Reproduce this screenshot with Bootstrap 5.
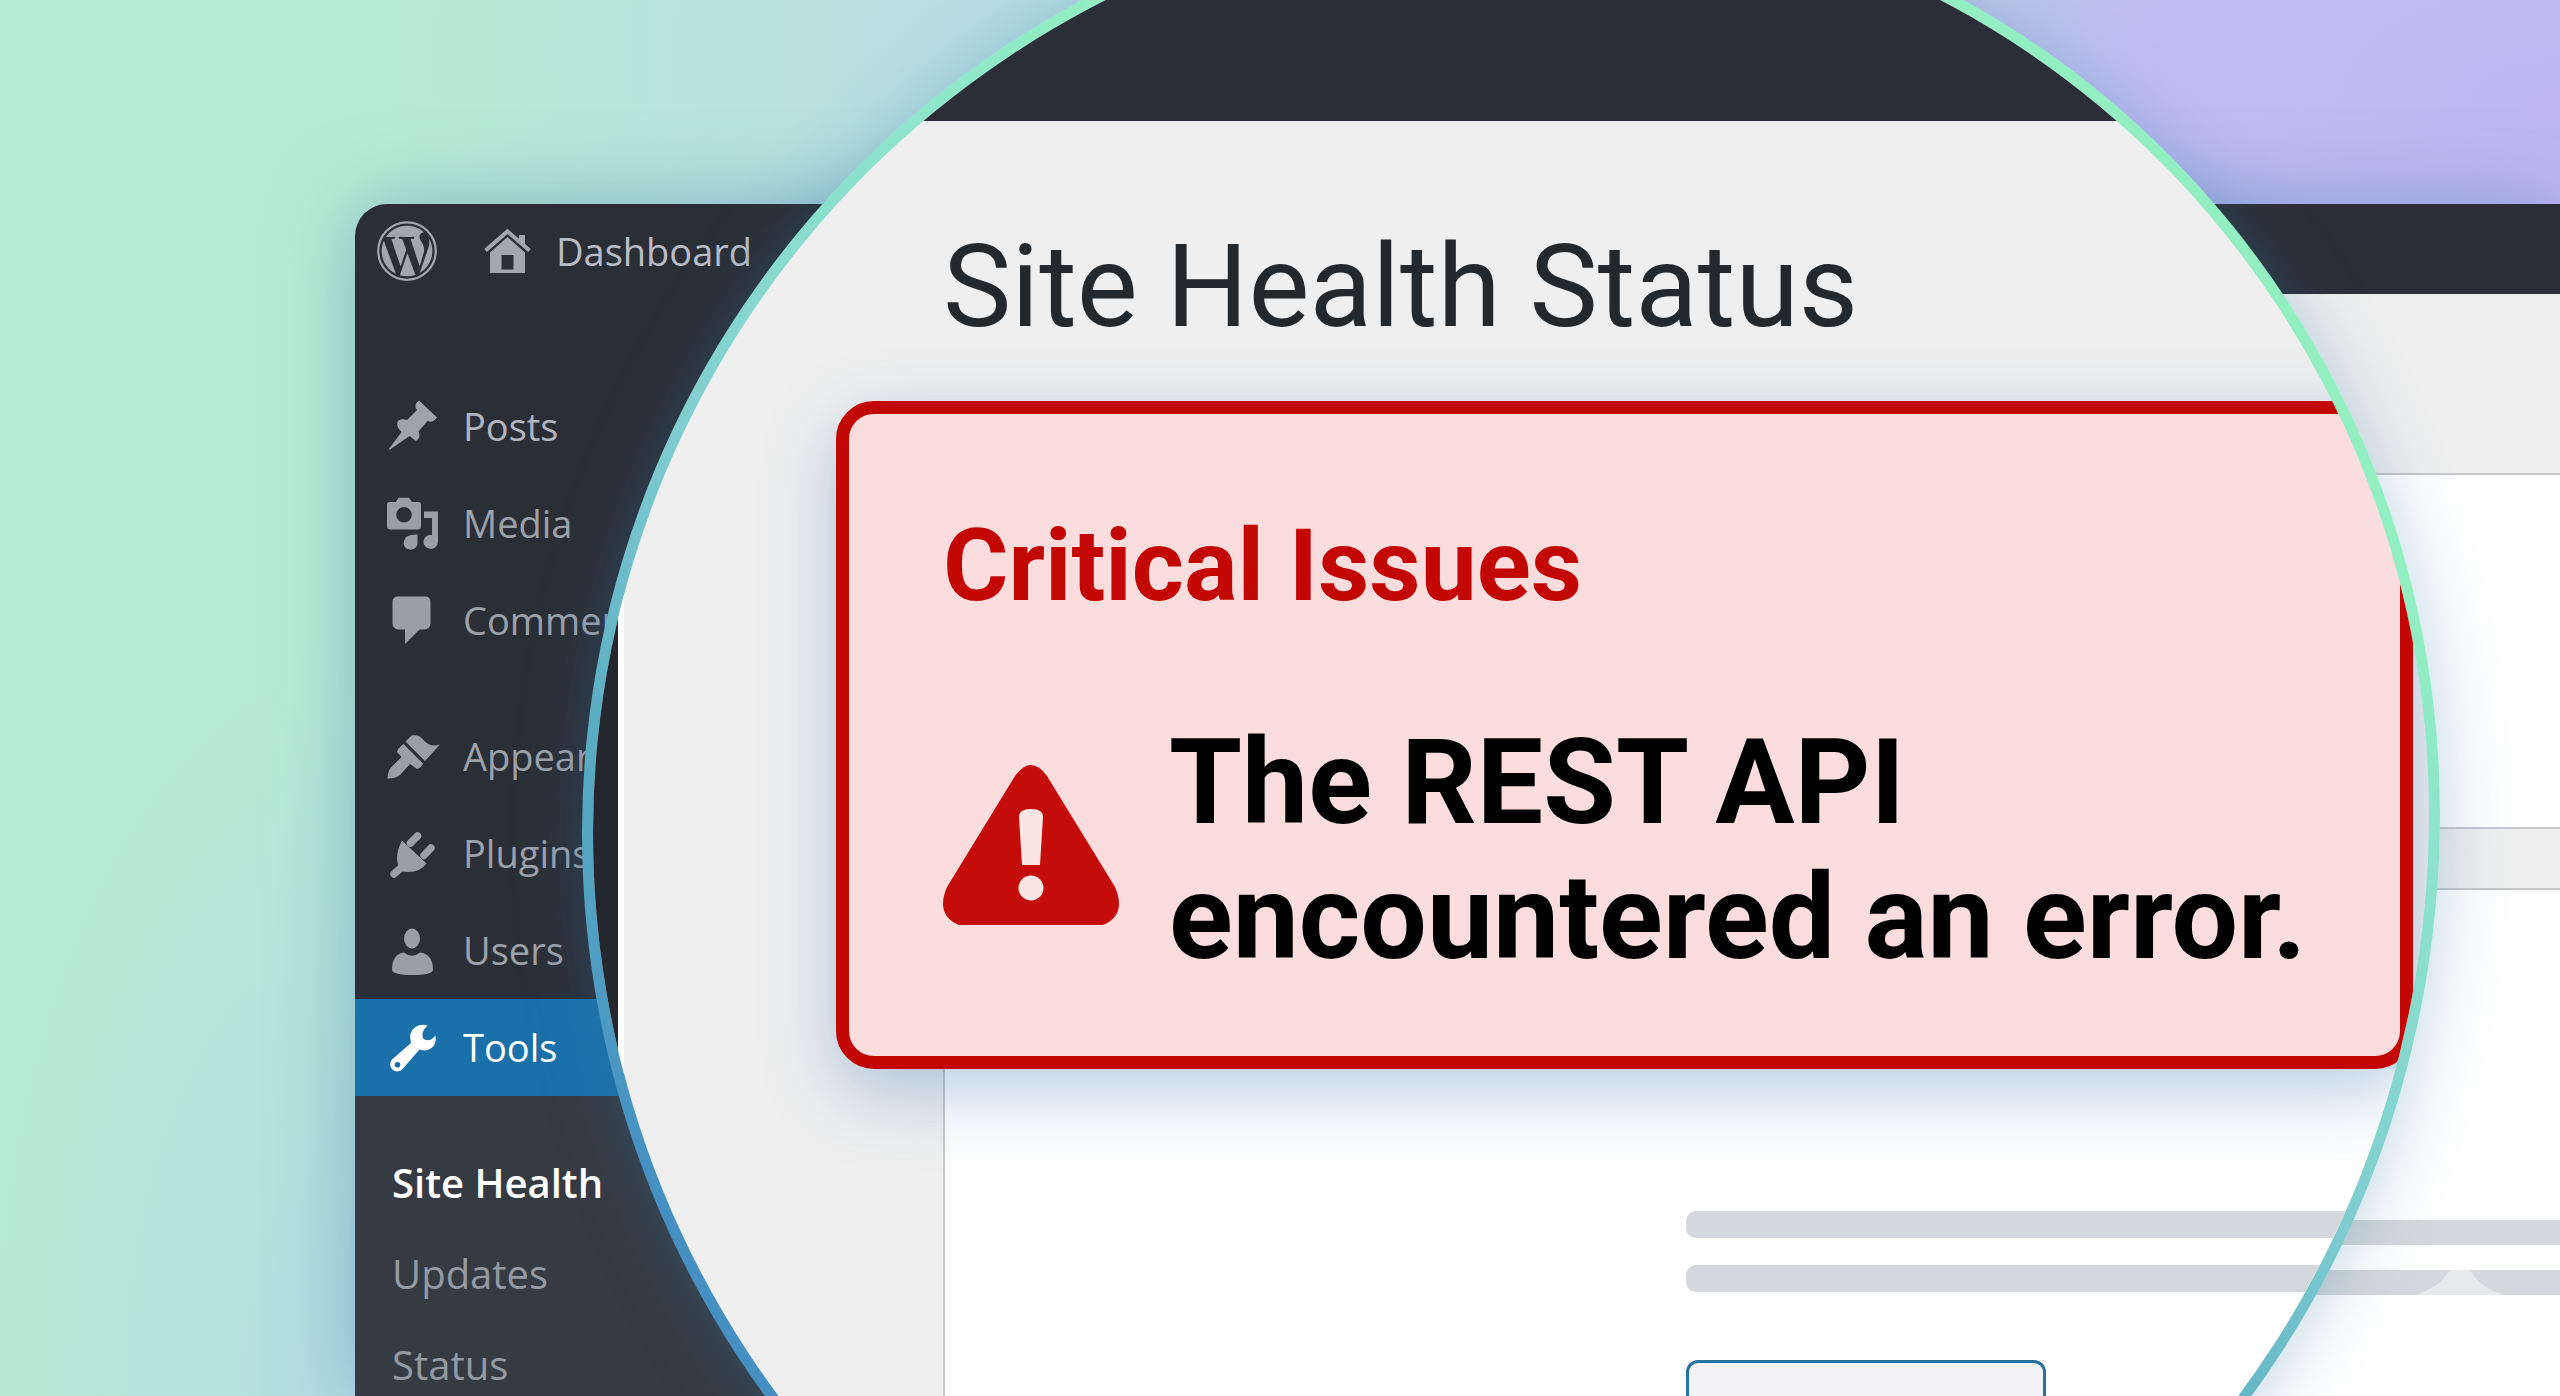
<!DOCTYPE html>
<html lang="en">
<head>
<meta charset="utf-8">
<meta name="viewport" content="width=device-width, initial-scale=1">
<title>Site Health Status</title>
<link href="https://cdn.jsdelivr.net/npm/bootstrap@5.3.0/dist/css/bootstrap.min.css" rel="stylesheet">
<style>
  :root {
    --ink: #2b2e36;
    --ink-soft: #363a42;
    --paper: #efefef;
    --rule: #c6c8cc;
    --alert: #c20705;
    --bar: #d4d8dc;
  }
  body {
    background:
      radial-gradient(ellipse 1100px 640px at 100% 8%, #bfb6f3 0%, #bfbcf3 38%, rgba(184, 200, 240, 0) 100%),
      radial-gradient(ellipse 640px 640px at 40% 4%, #b6dce4 0%, #b8dfe2 20%, rgba(184, 235, 212, 0) 100%),
      radial-gradient(ellipse 380px 760px at 14% 100%, #b4dce4 0%, rgba(184, 235, 212, 0) 100%),
      #b8ebd4;
    font-family: "Open Sans", "Noto Sans", sans-serif;
  }
  .stage { min-height: 100vh; padding: 204px 0 0 355px; }

  /* admin window */
  .admin {
    background: var(--paper);
    border-top-left-radius: 32px;
    box-shadow: 0 0 80px rgba(80, 130, 180, .5);
    overflow: hidden;
    height: calc(100vh - 204px);
  }
  .admin-top { background: var(--ink); height: 90px; padding: 4px 22px 0; color: #b9bcc6; flex: none; }
  .admin-top a { color: inherit; font-size: 38px; line-height: 52px; }
  .logo { width: 60px; height: 60px; margin-right: 47px; }
  .home { width: 48px; height: 48px; }
  .side { background: var(--ink); width: 480px; flex: none; padding-top: 84px; }
  .side-link {
    display: flex; align-items: center; gap: 23px;
    height: 97px; padding-left: 29px;
    color: #9da1aa; font-size: 38px; white-space: nowrap; text-decoration: none;
  }
  .side-link svg { width: 56px; height: 56px; flex: none; }
  .side-link.first { color: #b2b5bf; }
  .side-link.current { background: #1a71a9; color: #fff; }
  .group-gap { margin-top: 39px; }
  .submenu { background: var(--ink-soft); padding: 41px 0 0 37px; }
  .submenu a { display: flex; align-items: center; height: 91px; font-size: 40px; color: #9499a3; text-decoration: none; white-space: nowrap; }
  .submenu a.current { color: #fff; font-weight: 600; }
  .pane { background: #fff; border-top: 2px solid var(--rule); border-bottom: 2px solid var(--rule); }
  .pane-one { height: 356px; margin-top: 179px; }
  .pane-two { margin-top: 59px; padding-top: 330px; border-bottom: 0; }
  .stripe { background: var(--bar); height: 25px; margin-bottom: 25px; position: relative; }
  .spark { position: absolute; right: 56px; top: 0; width: 90px; height: 25px; }

  /* magnifier */
  .lens {
    position: absolute; left: 582px; top: -112px;
    width: 1858px; height: 1890px;
    border-radius: 51% 49% 50% 50% / 50% 49% 51% 50%; padding: 11px;
    background: linear-gradient(205deg, #93efc2 0%, #93efc2 26%, #8be0cd 38%, #7fccd0 50%, #5aacc2 62%, #458fc2 78%, #458fc2 100%);
    box-shadow: 0 4px 70px rgba(50, 120, 170, .32);
  }
  .glass { border-radius: 51% 49% 50% 50% / 50% 49% 51% 50%; overflow: hidden; height: 100%; background: var(--paper); }
  .glass-top { background: var(--ink); height: 222px; flex: none; }
  .glass-edge { background: #24272e; width: 25px; flex: none; }
  .glass-light { background: #fff; width: 6px; flex: none; }
  .glass-main { padding: 98px 0 0 212px; font-family: Roboto, sans-serif; min-width: 0; }
  .glass-title { font-size: 115px; line-height: 136px; font-weight: 400; color: #23282d; margin: 0 0 46px 107px; }
  .issue {
    position: relative; width: 1577px; height: 668px;
    background: #fadddc; border: 13px solid var(--alert); border-radius: 38px;
    padding: 94px 90px 0 94px;
    box-shadow: 0 24px 70px rgba(50, 110, 180, .34);
  }
  .issue-kind { font-size: 100px; line-height: 116px; font-weight: 700; color: var(--alert); margin: 0 0 92px; }
  .issue-text { font-size: 118px; line-height: 135px; font-weight: 700; color: #000; margin: 0; white-space: nowrap; }
  .warn { width: 176px; height: 160px; margin: 49px 50px 0 0; flex: none; }
  .sheet { background: #fff; border-left: 2px solid var(--rule); margin-left: 107px; padding: 142px 0 0 741px; height: 800px; width: 1700px; }
  .line-fill { background: var(--bar); height: 27px; border-radius: 10px; margin-bottom: 27px; width: 900px; }
  .blank-btn { width: 360px; height: 96px; margin-top: 68px; background: #f2f2f4; border: 3px solid #2672a0; border-radius: 12px; }
</style>
</head>
<body class="overflow-hidden">
<div class="stage position-relative overflow-hidden">

  <div class="admin d-flex flex-column">
    <header class="admin-top d-flex align-items-center">
      <svg class="logo" viewBox="0 0 24 24" fill="#a3a6b1" aria-hidden="true">
        <circle cx="12" cy="12" r="11.5" fill="none" stroke="#a3a6b1" stroke-width=".9"/>
        <g transform="translate(.72 .72) scale(.94)">
          <path d="M21.469 6.825c.84 1.537 1.318 3.3 1.318 5.175 0 3.979-2.156 7.456-5.363 9.325l3.295-9.527c.615-1.54.82-2.771.82-3.864 0-.405-.026-.78-.07-1.11z"/>
          <path d="M13.488 6.93c.647-.03 1.232-.105 1.232-.105.582-.075.514-.93-.067-.899 0 0-1.755.135-2.88.135-1.064 0-2.85-.15-2.85-.15-.585-.03-.661.855-.075.885 0 0 .54.061 1.125.09l1.68 4.605-2.37 7.08L5.354 6.9c.649-.03 1.234-.1 1.234-.1.585-.075.516-.93-.065-.896 0 0-1.746.138-2.874.138-.2 0-.438-.008-.69-.015C4.911 3.15 8.235 1.215 12 1.215c2.809 0 5.365 1.072 7.286 2.833-.046-.003-.091-.009-.141-.009-1.06 0-1.812.923-1.812 1.914 0 .89.513 1.643 1.06 2.531.411.72.89 1.643.89 2.977 0 .915-.354 1.994-.821 3.479l-1.075 3.585z"/>
          <path d="M12 22.784c-1.059 0-2.081-.153-3.048-.437l3.237-9.406 3.315 9.087c.024.053.05.101.078.149-1.12.393-2.325.609-3.582.609z"/>
          <path d="M1.211 12c0-1.564.336-3.05.935-4.39L7.29 21.709C3.694 19.96 1.212 16.271 1.211 12z"/>
        </g>
      </svg>
      <a href="#" class="d-flex align-items-center text-decoration-none">
        <svg class="home" viewBox="0 0 48 48" fill="#a3a6b1" aria-hidden="true">
          <path d="M1.500 23.500 23.500 4.500 45.500 23.500" fill="none" stroke="#a3a6b1" stroke-width="4"/>
          <path d="M35 8h6v11l-6-5z"/>
          <path fill-rule="evenodd" d="M23.500 10 41 25.500V46H6V25.500zM17.500 28v14.500h12V28z"/>
        </svg>
        <span class="ms-4">Dashboard</span>
      </a>
    </header>

    <div class="d-flex flex-grow-1">
      <nav class="side" aria-label="Admin menu">
        <a href="#" class="side-link first">
          <svg viewBox="0 0 56 56" fill="#a0a3ae" aria-hidden="true"><path d="M4.500 50.500 17.500 33Q11 26 14 22Q17 19 23 21L33 11Q29 6 35 1.500L53 18.500Q48.500 24.500 43.500 22L34.500 32.500Q37.500 38 32 42L25.500 37 6 50.500z"/></svg>Posts</a>
        <a href="#" class="side-link">
          <svg viewBox="0 0 56 56" fill="#9b9ea7" aria-hidden="true">
            <path fill-rule="evenodd" d="M6 6h6l2.500-4.200h10.500L28 6h6a3 3 0 0 1 3 3v21a3.500 3.500 0 0 1-3.500 3.500h-27A3.500 3.500 0 0 1 3 30V9a3 3 0 0 1 3-3zM20 11a7.700 7.700 0 1 0 0 15.500 7.700 7.700 0 0 0 0-15.500z"/>
            <path d="M40 15.500h14V46a7.300 7 0 1 1-6-7V22h-8zM33.500 38.500V46a7 6.500 0 1 1-13.500-1Q21 38 33.500 38.500z"/></svg>Media</a>
        <a href="#" class="side-link">
          <svg viewBox="0 0 56 56" fill="#9b9ea7" aria-hidden="true"><path d="M13.500 3.500h28a5 5 0 0 1 5 5v22a6 6 0 0 1-6 6h-5L21 51V36.500h-6.500a6 6 0 0 1-6-6v-22a5 5 0 0 1 5-5z"/></svg>Comments</a>
        <a href="#" class="side-link group-gap">
          <svg viewBox="0 0 56 56" fill="#9b9ea7" aria-hidden="true">
            <path d="M3.500 49.500Q4 42 7 38.500L17.500 28 13 23Q13 20 19.500 15L39 34.500Q37 39 33 40L26 35 15.500 46.500Q10 50 3.500 49.500z"/>
            <path d="M21.500 12.500 27.500 6.500Q35 5 39 10.500 46 19 56 15.500L41 32z"/></svg>Appearance</a>
        <a href="#" class="side-link">
          <svg viewBox="0 0 56 56" fill="#9b9ea7" aria-hidden="true">
            <path d="M18 14.500 42.500 37.500Q35 48 18 45.500 8 34 18 14.500z"/>
            <path d="M10 48 16 42.500M26.500 17 33.500 10M40 29.500 47 22" stroke="#9b9ea7" stroke-width="7.500" stroke-linecap="round"/></svg>Plugins</a>
        <a href="#" class="side-link">
          <svg viewBox="0 0 56 56" fill="#9b9ea7" aria-hidden="true">
            <ellipse cx="28" cy="15.500" rx="8" ry="10"/>
            <path d="M20 29.500Q28 36 36 29.500 49 31 49 47 48 52 28.500 52 9 52 8 47 8 31 20 29.500z"/></svg>Users</a>
        <a href="#" class="side-link current" aria-current="true">
          <svg viewBox="0 0 56 56" fill="#fff" aria-hidden="true"><path fill-rule="evenodd" d="M43.500 5.500Q36.500 12 39 18.500 45.500 23 51.500 15.500 53 25 46 29 41 31.500 35.500 29.500L19 48.500A7 7 0 0 1 7.500 40L27 23Q24 12 31.500 7 37 3.500 43.500 5.500zM13.500 42a2.800 2.800 0 1 0 0 5.600 2.800 2.800 0 0 0 0-5.600z"/></svg>Tools</a>
        <div class="submenu">
          <a href="#" class="current">Site Health</a>
          <a href="#">Updates</a>
          <a href="#">Status</a>
        </div>
      </nav>
      <main class="flex-grow-1">
        <div class="pane pane-one"></div>
        <div class="pane pane-two h-100">
          <div class="stripe"></div>
          <div class="stripe">
            <svg class="spark" viewBox="0 0 90 25" aria-hidden="true"><path d="M36 0H56Q66 18 90 25H0Q26 18 36 0z" fill="#e8e9eb"/></svg>
          </div>
        </div>
      </main>
    </div>
  </div>

  <section class="lens" aria-label="Site Health Status">
    <div class="glass d-flex flex-column">
      <div class="glass-top"></div>
      <div class="d-flex flex-grow-1">
        <div class="glass-edge"></div>
        <div class="glass-light"></div>
        <div class="glass-main">
          <h1 class="glass-title">Site Health Status</h1>
          <div class="issue" role="alert">
            <h2 class="issue-kind">Critical Issues</h2>
            <div class="d-flex">
              <svg class="warn" viewBox="0 0 176 160" aria-hidden="true">
                <path d="M72 11Q88-11 104 11L172 122Q184 150 160 160H16Q-8 150 4 122z" fill="#c40d0a"/>
                <path d="M76 52Q76 44 88 44 100 44 100 52L97 100H79z" fill="#fbe6e4"/>
                <circle cx="88" cy="123" r="12.500" fill="#fbe6e4"/>
              </svg>
              <p class="issue-text">The REST API<br>encountered an error.</p>
            </div>
          </div>
          <div class="sheet">
            <div class="line-fill"></div>
            <div class="line-fill"></div>
            <button type="button" class="blank-btn d-block" aria-label="Action"></button>
          </div>
        </div>
      </div>
    </div>
  </section>

</div>
<script src="https://cdn.jsdelivr.net/npm/bootstrap@5.3.0/dist/js/bootstrap.bundle.min.js"></script>
</body>
</html>
